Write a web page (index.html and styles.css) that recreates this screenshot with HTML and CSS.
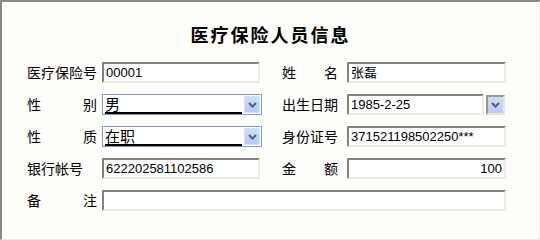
FILE: index.html
```html
<!DOCTYPE html>
<html lang="zh-CN">
<head>
    <meta charset="UTF-8">
    <title>医疗保险人员信息</title>
    <link rel="stylesheet" href="styles.css">
</head>
<body>
    <div class="panel">
        <h1 class="title">医疗保险人员信息</h1>
        <div class="form">
            <label class="label">医疗保险号</label>
            <div class="input">00001</div>
            <label class="label right"><span>姓</span><span>名</span></label>
            <div class="input wide">张磊</div>

            <label class="label"><span>性</span><span>别</span></label>
            <div class="select">
                <span class="picked">男</span>
                <span class="arrow"><svg width="9" height="6" viewBox="0 0 9 6"><path d="M1 1 L4.5 4.5 L8 1" fill="none" stroke="#4b5f86" stroke-width="2"/></svg></span>
            </div>
            <label class="label right">出生日期</label>
            <div class="date">
                <div class="input date-text">1985-2-25</div>
                <span class="date-btn"><svg width="9" height="6" viewBox="0 0 9 6"><path d="M1 1 L4.5 4.5 L8 1" fill="none" stroke="#4b5f86" stroke-width="2"/></svg></span>
            </div>

            <label class="label"><span>性</span><span>质</span></label>
            <div class="select">
                <span class="picked">在职</span>
                <span class="arrow"><svg width="9" height="6" viewBox="0 0 9 6"><path d="M1 1 L4.5 4.5 L8 1" fill="none" stroke="#4b5f86" stroke-width="2"/></svg></span>
            </div>
            <label class="label right">身份证号</label>
            <div class="input wide">371521198502250***</div>

            <label class="label">银行帐号</label>
            <div class="input">622202581102586</div>
            <label class="label right"><span>金</span><span>额</span></label>
            <div class="input wide num">100</div>

            <label class="label"><span>备</span><span>注</span></label>
            <div class="input full"></div>
        </div>
    </div>
</body>
</html>
```

FILE: styles.css
```css
body {
    margin: 0;
    font-family: "Noto Sans CJK SC", "Liberation Sans", sans-serif;
    background-color: #fff;
}

.panel {
    width: 540px;
    height: 240px;
    box-sizing: border-box;
    border-top: 2px solid #8b8b83;
    border-left: 2px solid #8b8b83;
    border-right: 1px solid #ecebe5;
    border-bottom: 1px solid #ecebe5;
    background-color: #fdfdfa;
    padding: 20px 0 0 25px;
}

.title {
    margin: 0 0 16px -25px;
    height: 24px;
    font-size: 18px;
    line-height: 24px;
    letter-spacing: 2px;
    text-align: center;
    color: #000;
}

/* form grid: label | field | label | field */
.form {
    display: grid;
    grid-template-columns: 75px 180px 65px 159px;
    grid-auto-rows: 21px;
    row-gap: 11px;
    align-items: center;
}

.label {
    display: flex;
    justify-content: space-between;
    width: 70px;
    font-size: 14px;
    line-height: 21px;
    color: #000;
    white-space: nowrap;
}

.label.right {
    width: 56px;
}

.input {
    box-sizing: border-box;
    width: 158px;
    height: 21px;
    padding: 0 2px;
    border: 2px solid;
    border-color: #83837d #ecebe4 #ecebe4 #83837d;
    background-color: #fff;
    font-family: "Liberation Sans", "Noto Sans CJK SC", sans-serif;
    font-size: 13px;
    line-height: 17px;
    color: #000;
    white-space: nowrap;
    overflow: hidden;
}

.input.wide {
    width: 159px;
}

.input.num {
    text-align: right;
}

.input.full {
    grid-column: 2 / 5;
    width: 404px;
}

/* drop-down lists */
.select {
    box-sizing: border-box;
    display: flex;
    align-items: center;
    width: 160px;
    height: 21px;
    padding: 0 1px 0 2px;
    border: 1px solid #7f9db9;
    background-color: #fff;
}

.picked {
    flex: 1;
    height: 16px;
    margin-right: 2px;
    border-bottom: 2px solid #000;
    font-size: 15px;
    line-height: 16px;
    color: #000;
}

.arrow,
.date-btn {
    display: flex;
    align-items: center;
    justify-content: center;
    box-sizing: border-box;
    width: 16px;
    height: 17px;
    border: 1px solid #d6e2fb;
    border-radius: 1px;
    background: linear-gradient(#cfdcfb, #b7cbf5);
}

.date {
    display: flex;
    align-items: center;
}

.input.date-text {
    width: 137px;
}

.date-btn {
    width: 19px;
    height: 20px;
    margin-left: 2px;
    border: 2px solid;
    border-color: #9a9a94 #e6e6e0 #e6e6e0 #9a9a94;
    border-radius: 0;
}
```
